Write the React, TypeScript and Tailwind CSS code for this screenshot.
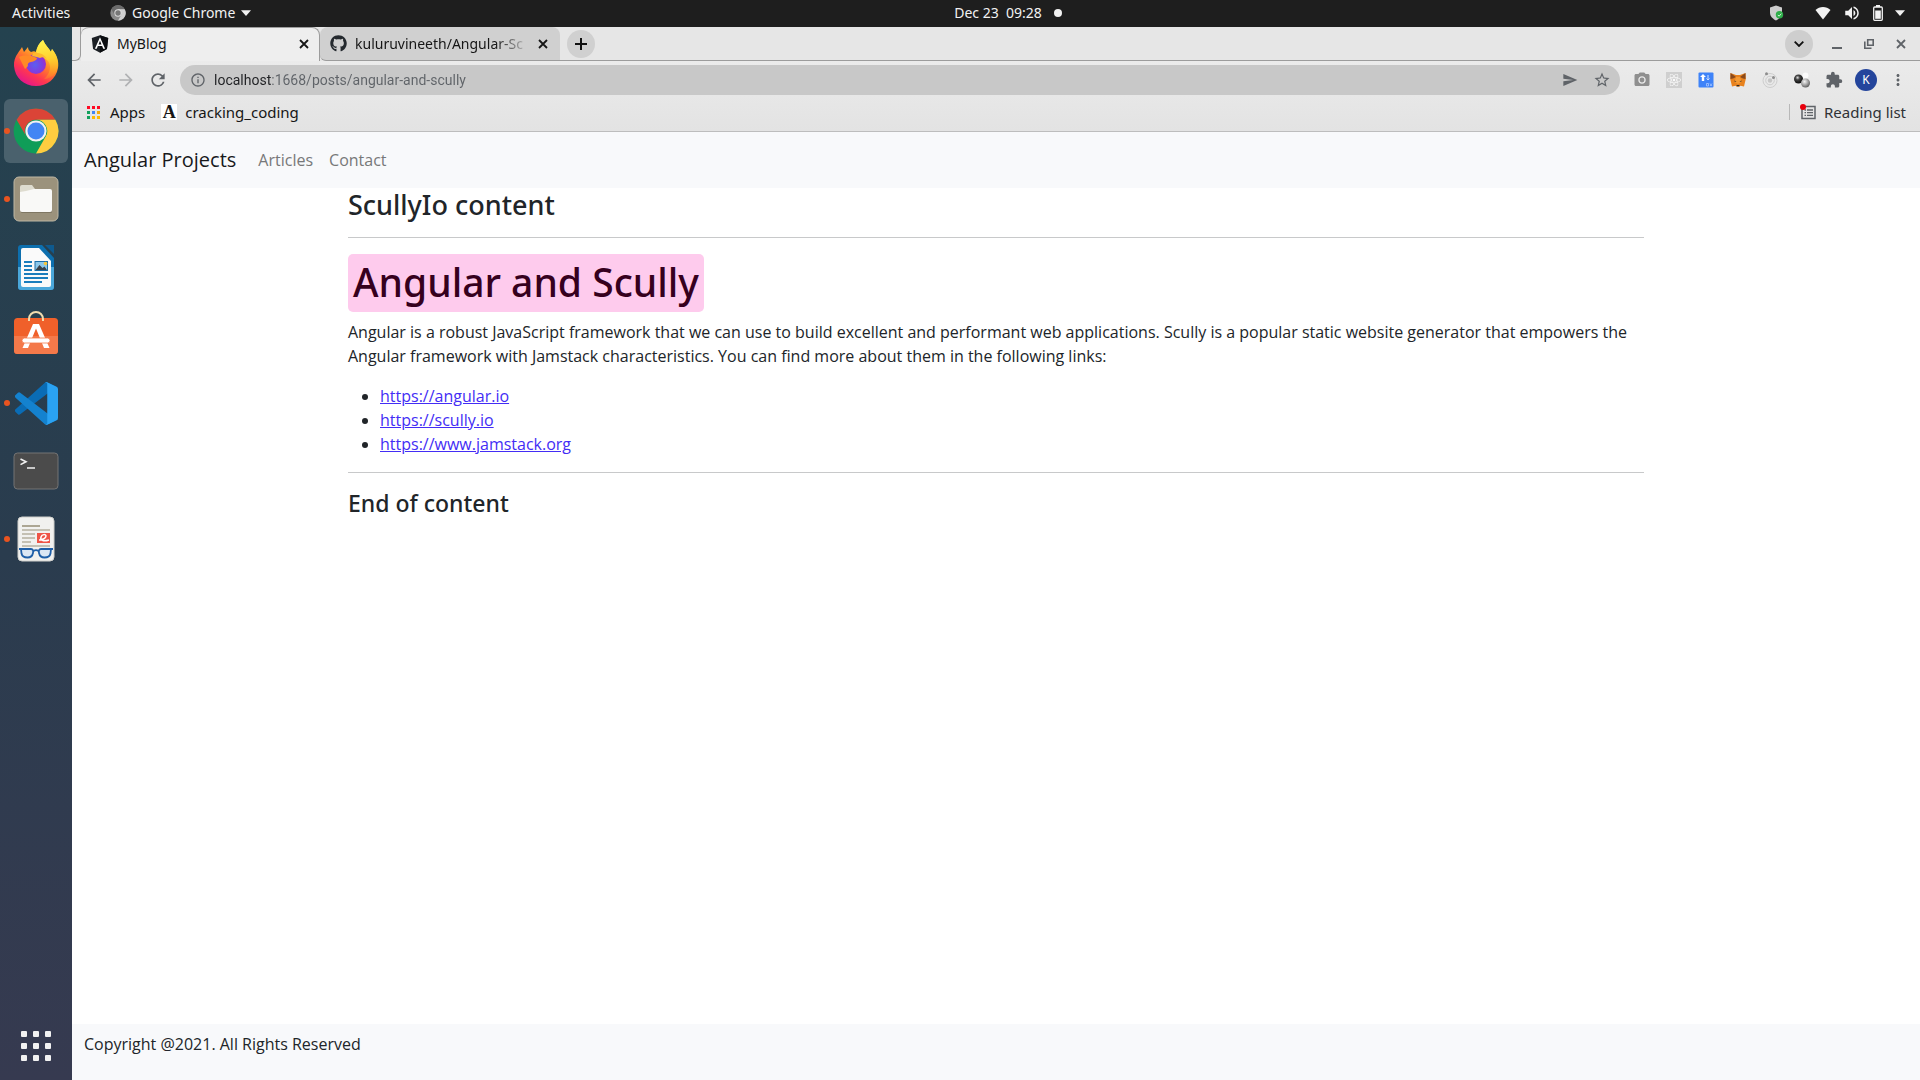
import type { ReactNode } from "react";
import {
  MdArrowBack,
  MdArrowForward,
  MdRefresh,
  MdInfoOutline,
  MdSend,
  MdStarBorder,
  MdPhotoCamera,
  MdExtension,
  MdMoreVert,
  MdVolumeUp,
} from "react-icons/md";
import { FaReact, FaGithub } from "react-icons/fa";

/* ---------- Dock icons ---------- */

function FirefoxIcon() {
  return (
    <svg viewBox="0 0 48 48" className="size-12" aria-hidden="true">
      <defs>
        <linearGradient id="ffBody" x1="0.8" y1="0.05" x2="0.25" y2="0.95">
          <stop offset="0" stopColor="#fff44f" />
          <stop offset="0.25" stopColor="#ffc02b" />
          <stop offset="0.5" stopColor="#ff7a2c" />
          <stop offset="0.75" stopColor="#ff3750" />
          <stop offset="1" stopColor="#e5178a" />
        </linearGradient>
        <linearGradient id="ffFlame" x1="0.4" y1="0" x2="0.5" y2="1">
          <stop offset="0" stopColor="#fff44f" />
          <stop offset="0.5" stopColor="#ffd02f" />
          <stop offset="1" stopColor="#ff9a1f" stopOpacity="0.3" />
        </linearGradient>
        <radialGradient id="ffGlobe" cx="0.45" cy="0.55" r="0.6">
          <stop offset="0" stopColor="#5a5ff0" />
          <stop offset="0.6" stopColor="#7d3fe0" />
          <stop offset="1" stopColor="#a528c4" />
        </radialGradient>
      </defs>
      <path
        fill="url(#ffBody)"
        d="M31 1c2 5 6 8 8 12l1-3c5 6 7 12 6 19-2 11-11 18-22 18C12 47 3 39 2 27c-.3-5 1-9 4-13 1-2 3-4 4-6l2 5 4-5c0 2 1 4 3 5 2-1 4-1 5 0 1-5 3-9 7-12z"
      />
      <path
        fill="url(#ffFlame)"
        d="M31 1c2 5 6 8 8 12l1-3c6 8 8 16 3 24-3 4-7 6-11 6 6-5 8-13 4-18-3-4-10-5-12-9 1-5 3-9 7-12z"
      />
      <circle cx="24" cy="25" r="10" fill="url(#ffGlobe)" />
      <path fill="#ff8a26" d="M7 18c5-2 11-2 18 1 0 2-3 3.500-6 4-3 .4-3.500 2-3 4l-3 3z" />
      <path fill="#ffb82e" d="M21 14c6-1 11 1 14 6-3-2-5-2-7-1-2-1-5-1-8-2z" />
    </svg>
  );
}

function ChromeIcon() {
  return (
    <svg viewBox="0 0 48 48" className="size-12" aria-hidden="true">
      <circle cx="24" cy="24" r="22.4" fill="#0f9d58" />
      <path fill="#db4437" d="M4.6 12.8A22.4 22.4 0 0 1 43.4 12.8H24A11.2 11.2 0 0 0 14.3 29.6z" />
      <path fill="#ffcd40" d="M43.4 12.8A22.4 22.4 0 0 1 24 46.4l9.7-16.8A11.2 11.2 0 0 0 24 12.8z" />
      <circle cx="24" cy="24" r="10.6" fill="#f1f1f1" />
      <circle cx="24" cy="24" r="8.5" fill="#4285f4" />
    </svg>
  );
}

function FilesIcon() {
  return (
    <svg viewBox="0 0 48 48" className="size-12" aria-hidden="true">
      <rect x="2" y="2" width="44" height="44" rx="5" fill="#9b927c" stroke="#beb7a4" strokeWidth="1" />
      <path fill="#7f7763" d="M9 34h31v3a1 1 0 0 1-1 1H10a1 1 0 0 1-1-1z" />
      <path fill="#dedccf" d="M8 12a2 2 0 0 1 2-2h10l3 4v6H8z" />
      <path fill="#f9f9f7" d="M8 17l6-1 8-2h16a2 2 0 0 1 2 2v19a2 2 0 0 1-2 2H10a2 2 0 0 1-2-2z" />
    </svg>
  );
}

function WriterIcon() {
  return (
    <svg viewBox="0 0 48 48" className="size-12" aria-hidden="true">
      <path fill="#0d6fae" d="M9 2h21l12 13v29a3 3 0 0 1-3 3H9a3 3 0 0 1-3-3V5a3 3 0 0 1 3-3z" />
      <path fill="#4aa7da" d="M6 24h36v20a3 3 0 0 1-3 3H9a3 3 0 0 1-3-3z" />
      <path fill="#0e5a8f" d="M33 2h9v9z" />
      <path fill="#fafafa" d="M11 5h16l12 13v24a2 2 0 0 1-2 2H11a2 2 0 0 1-2-2V7a2 2 0 0 1 2-2z" />
      <path
        stroke="#1a7dbd"
        strokeWidth="2"
        d="M12 19h8M12 23h8M12 27h8M12 31h24M12 35h24M12 39h18"
      />
      <rect x="23" y="18.500" width="12.500" height="9" fill="#8cc7ea" stroke="#1a6ea8" />
      <path fill="#39424a" d="M23.500 27l4-5 3 3 2-1.500 2.500 3.500z" />
      <circle cx="33.500" cy="20.500" r="1.800" fill="#f7c63c" />
    </svg>
  );
}

function SoftwareIcon() {
  return (
    <svg viewBox="0 3 48 48" className="size-12" aria-hidden="true">
      <rect x="2" y="10" width="44" height="36" rx="3.500" fill="#f0602a" />
      <path fill="#f4794a" d="M2 28h44v14.500a3.500 3.500 0 0 1-3.500 3.500h-37A3.500 3.500 0 0 1 2 42.500z" />
      <path fill="none" stroke="#f2dcae" strokeWidth="2" d="M17 13v-2a7 7 0 0 1 14 0v2" />
      <path fill="#fff" d="M21 16h6l10.500 24h-5.500l-8-19.500L16 40h-5.500z" />
      <rect x="10" y="30" width="28" height="5" rx="2.500" fill="#fff" stroke="#f4794a" strokeWidth="0.8" />
    </svg>
  );
}

function CodeIcon() {
  return (
    <svg viewBox="0 0 100 100" className="size-[43px]" aria-hidden="true">
      <path
        fill="#0a6cb5"
        d="M96.461 10.796 75.857.876A6.23 6.23 0 0 0 68.750 2.083L1.299 63.583a4.167 4.167 0 0 0 .003 6.164l5.510 5.009a4.167 4.167 0 0 0 5.320.236l81.229-61.622C96.086 11.303 100 13.246 100 16.667v-.24a6.250 6.250 0 0 0-3.539-5.630z"
      />
      <path
        fill="#1482cf"
        d="m96.461 89.204-20.604 9.920a6.229 6.229 0 0 1-7.107-1.207L1.299 36.417a4.167 4.167 0 0 1 .003-6.164l5.510-5.009a4.167 4.167 0 0 1 5.320-.236l81.229 61.622c2.725 2.067 6.639.124 6.639-3.297v.24a6.250 6.250 0 0 1-3.539 5.630z"
      />
      <path
        fill="#2aa2f2"
        d="M75.858 99.126a6.232 6.232 0 0 1-7.108-1.210c2.306 2.307 6.250.674 6.250-2.588V4.672c0-3.262-3.944-4.895-6.250-2.589a6.232 6.232 0 0 1 7.108-1.210l20.600 9.908A6.250 6.250 0 0 1 100 16.413v67.174a6.250 6.250 0 0 1-3.541 5.633z"
      />
    </svg>
  );
}

function TerminalIcon() {
  return (
    <svg viewBox="0 0 48 48" className="size-12" aria-hidden="true">
      <rect x="2" y="6" width="44" height="36" rx="3.500" fill="#4b4b4b" stroke="#747474" strokeWidth="1" />
      <path fill="none" stroke="#f2f2f2" strokeWidth="1.600" d="M8.500 12l5.500 2.800-5.500 2.800M15 21h8" />
    </svg>
  );
}

function ViewerIcon() {
  return (
    <svg viewBox="0 0 48 48" className="size-12" aria-hidden="true">
      <rect x="6" y="2" width="36" height="44" rx="4" fill="#f1f1ef" stroke="#cfcfcb" />
      <path stroke="#a49d88" strokeWidth="1.800" d="M10 11h18" />
      <path stroke="#c4c0b3" strokeWidth="1.800" d="M10 15h28M10 19h13M10 23h13M10 27h9M10 31h28" />
      <rect x="25" y="18" width="13" height="10" fill="#ee5447" />
      <path fill="none" stroke="#fff" strokeWidth="1.500" d="M27 25c4 0 7-2 7-4s-4-2-5 1 2 5 8 3" />
      <g fill="#dbe7f4" stroke="#1f5fa8" strokeWidth="1.800">
        <path d="M9 34h10c2 0 2.500 1.500 2 4s-2 4.500-5.500 4.500-5.500-1.500-6-4z" />
        <path d="M39 34H29c-2 0-2.500 1.500-2 4s2 4.500 5.500 4.500 5.500-1.500 6-4z" />
        <path fill="none" d="M7 34h5M36 34h5M21.500 36c1.500-1 3.500-1 5 0" />
      </g>
    </svg>
  );
}

/* ---------- Small icons ---------- */

function AngularIcon() {
  return (
    <svg viewBox="30 28 190 204" className="size-[18px] shrink-0" aria-hidden="true">
      <path fill="#1b1f24" d="M125 30 31.900 63.200l14.200 123.100L125 230l78.900-43.700 14.200-123.100z" />
      <path fill="#0b0d10" d="M125 30v200l78.900-43.700 14.200-123.100z" />
      <path
        fill="#fff"
        d="M125 52.100 66.800 182.600h21.700l11.700-29.200h49.400l11.700 29.200H183zm17 83.300h-34l17-40.900z"
      />
    </svg>
  );
}

function MonoChromeIcon() {
  return (
    <svg viewBox="0 0 48 48" className="size-4" aria-hidden="true">
      <circle cx="24" cy="24" r="23" fill="#8a8a8a" />
      <path fill="#6b6b6b" d="M4 12.500A23 23 0 0 1 44 12.500H24L14 30z" />
      <path fill="#cfcfcf" d="M44 12.500A23 23 0 0 1 24 47l10-17.500-10-17z" />
      <circle cx="24" cy="24" r="11" fill="#dcdcdc" />
      <circle cx="24" cy="24" r="8" fill="#777" />
    </svg>
  );
}

function CloseIcon({ className }: { className: string }) {
  return (
    <svg viewBox="0 0 10 10" className={className} aria-hidden="true">
      <path d="M1 1l8 8M9 1l-8 8" stroke="currentColor" strokeWidth="1.800" fill="none" />
    </svg>
  );
}

function ShieldIcon() {
  return (
    <svg viewBox="0 0 16 16" className="size-4" aria-hidden="true">
      <path fill="#cdcdcd" d="M7 .5l6 2v5c0 4-3 6.500-6 8-3-1.500-6-4-6-8v-5z" />
      <circle cx="10.500" cy="9.800" r="3.700" fill="#2fae4a" />
      <path d="M8.800 9.900l1.300 1.300 2.200-2.500" fill="none" stroke="#d8f5dd" strokeWidth="1" />
    </svg>
  );
}

function WifiIcon() {
  return (
    <svg viewBox="0 0 16 14" className="h-3.5 w-4" aria-hidden="true">
      <path fill="#f2f2f2" d="M8 13.500.5 4C4.500 0 11.500 0 15.500 4z" />
    </svg>
  );
}

function BatteryIcon() {
  return (
    <svg viewBox="0 0 10 16" className="h-4 w-2.5" aria-hidden="true">
      <path fill="#f2f2f2" d="M3 0h4v2H3z" />
      <rect x="0.700" y="2" width="8.600" height="13.300" rx="1" fill="none" stroke="#f2f2f2" strokeWidth="1.300" />
      <path fill="#f2f2f2" d="M2.200 5.500h5.600v8.300H2.200z" />
    </svg>
  );
}

function CaretDown() {
  return (
    <svg viewBox="0 0 10 6" className="h-1.5 w-2.5" aria-hidden="true">
      <path fill="#f2f2f2" d="M0 .3h10L5 6z" />
    </svg>
  );
}

function ReactExtIcon() {
  return (
    <span className="flex size-4 items-center justify-center bg-[#cfcfcf] text-[#fafafa]">
      <FaReact className="size-3.5" />
    </span>
  );
}

function UploadExtIcon() {
  return (
    <svg viewBox="0 0 16 16" className="size-4" aria-hidden="true">
      <rect x="0.500" y="0.500" width="15" height="15" rx="1" fill="#3f83f8" />
      <path fill="#fff" d="M5 2l3 3H6.200v4H3.800V5H2z" />
      <path stroke="#cfe0ff" strokeWidth="1" fill="none" d="M10 3v5M8.500 6.500L10 8l1.500-1.500" />
      <path stroke="#a9c8ff" strokeWidth="0.800" fill="none" d="M8.500 11.500h2v2.500h-2zM12 11.500l2 2.500M14 11.500l-2 2.500" />
    </svg>
  );
}

function FoxExtIcon() {
  return (
    <svg viewBox="0 0 16 16" className="size-4" aria-hidden="true">
      <path fill="#e8821e" d="M.5 1l5.500 2h4l5.500-2 .3 6-1 4-.8 3.500-3.500-.7-1.500 1h-2l-1.500-1-3.500.7L1.200 11l-1-4z" />
      <path fill="#8a4a1c" d="M.5 1l5.500 4-3 1.500L.5 7zM15.500 1L10 5l3 1.500 2.500.5z" />
      <path fill="#f59a33" d="M6 5h4l1.500 5-3.500 2-3.500-2z" />
      <path fill="#2b2b2b" d="M4.500 8.500l2 1-1.800.3zM11.500 8.500l-2 1 1.800.3zM6.700 13h2.600l.2 1.300h-3z" />
    </svg>
  );
}

function OrbitExtIcon() {
  return (
    <svg viewBox="0 0 16 16" className="size-4" aria-hidden="true">
      <g fill="none" stroke="#cdcdcd" strokeWidth="1">
        <circle cx="8" cy="8.500" r="7" />
        <circle cx="8" cy="8.500" r="4.300" />
      </g>
      <circle cx="8" cy="8.500" r="2.200" fill="#c6c6c6" />
      <circle cx="4.500" cy="1.800" r="1.500" fill="#8d8d8d" />
      <circle cx="11.500" cy="5.500" r="1.500" fill="#8d8d8d" />
    </svg>
  );
}

function BallsExtIcon() {
  return (
    <svg viewBox="0 0 16 16" className="size-4" aria-hidden="true">
      <defs>
        <radialGradient id="ballDark" cx="0.4" cy="0.35" r="0.6">
          <stop offset="0" stopColor="#ddd" />
          <stop offset="0.4" stopColor="#444" />
          <stop offset="1" stopColor="#111" />
        </radialGradient>
        <radialGradient id="ballGrey" cx="0.4" cy="0.35" r="0.7">
          <stop offset="0" stopColor="#f4f4f4" />
          <stop offset="0.6" stopColor="#999" />
          <stop offset="1" stopColor="#555" />
        </radialGradient>
      </defs>
      <circle cx="11.500" cy="3.500" r="3" fill="#fafafa" />
      <circle cx="4.500" cy="7" r="4.500" fill="url(#ballDark)" />
      <circle cx="11.500" cy="11" r="4.500" fill="url(#ballGrey)" />
    </svg>
  );
}

const appDots = [
  "bg-[#ff0a24]",
  "bg-[#ff0a24]",
  "bg-[#ff0a24]",
  "bg-[#12a05c]",
  "bg-[#4285f4]",
  "bg-[#f4a90b]",
  "bg-[#12a05c]",
  "bg-[#ffb900]",
  "bg-[#ffb900]",
];

/* ---------- Desktop ---------- */

function TopBar() {
  return (
    <header className="grid h-[27px] shrink-0 grid-cols-[1fr_auto_1fr] items-center bg-[#1e1e1e] pb-0.5 text-sm text-[#f2f2f2]">
      <div className="flex items-center">
        <button className="w-[98px] pl-3 text-left">Activities</button>
        <button className="flex items-center gap-1.5 pl-3">
          <MonoChromeIcon />
          <span>Google Chrome</span>
          <CaretDown />
        </button>
      </div>
      <button className="flex items-center gap-3 pl-24 whitespace-pre">
        Dec 23  09:28
        <span className="size-2 rounded-full bg-[#f2f2f2]" />
      </button>
      <div className="flex items-center justify-end gap-3 pr-[15px]">
        <span className="mr-[18px]">
          <ShieldIcon />
        </span>
        <WifiIcon />
        <MdVolumeUp className="size-[18px]" />
        <BatteryIcon />
        <CaretDown />
      </div>
    </header>
  );
}

type DockItem = { label: string; icon: ReactNode; running?: boolean; active?: boolean };

const dockItems: DockItem[] = [
  { label: "Firefox", icon: <FirefoxIcon /> },
  { label: "Google Chrome", icon: <ChromeIcon />, running: true, active: true },
  { label: "Files", icon: <FilesIcon />, running: true },
  { label: "LibreOffice Writer", icon: <WriterIcon /> },
  { label: "Ubuntu Software", icon: <SoftwareIcon /> },
  { label: "Visual Studio Code", icon: <CodeIcon />, running: true },
  { label: "Terminal", icon: <TerminalIcon /> },
  { label: "Document Viewer", icon: <ViewerIcon />, running: true },
];

function Dock() {
  return (
    <nav
      aria-label="Dock"
      className="flex w-[72px] shrink-0 flex-col items-center gap-1 bg-linear-to-b from-[#24424f] via-[#2a3c4e] to-[#363a50] pt-1"
    >
      {dockItems.map((item) => (
        <button
          key={item.label}
          aria-label={item.label}
          className={
            item.active
              ? "relative flex size-16 items-center justify-center rounded-md bg-[#4a616d]"
              : "relative flex size-16 items-center justify-center rounded-md"
          }
        >
          {item.running && (
            <span className="absolute top-1/2 left-0 size-1.5 -translate-y-1/2 rounded-full bg-[#e95420]" />
          )}
          {item.icon}
        </button>
      ))}
      <button aria-label="Show applications" className="mt-auto mb-[19px] grid grid-cols-3 gap-1.5">
        {Array.from({ length: 9 }, (_, i) => (
          <span key={i} className="size-1.5 rounded-[1px] bg-[#f2f2f2]" />
        ))}
      </button>
    </nav>
  );
}

/* ---------- Browser ---------- */

function TabStrip() {
  return (
    <div className="flex h-[34px] items-stretch bg-[#e6e6e6] text-sm text-[#161616]">
      <span className="w-[9px] rounded-br-md border-r border-b border-[#9c9c9c]" />
      <div className="flex w-[239px] items-center rounded-t-lg border-t border-r border-[#9c9c9c] bg-[#eeeeee] pr-1.5 pb-0.5 pl-2.5">
        <AngularIcon />
        <button className="flex-1 pl-2 text-left">MyBlog</button>
        <button aria-label="Close MyBlog" className="p-1">
          <CloseIcon className="size-2.5" />
        </button>
      </div>
      <div className="flex w-60 items-center rounded-t-lg rounded-bl-md border-b border-[#9c9c9c] bg-[#d0d0d0] pr-2 pl-2.5">
        <FaGithub className="size-[17px] shrink-0 text-[#24292e]" />
        <button className="mr-1 ml-2 flex-1 overflow-hidden mask-r-from-80% text-left whitespace-nowrap">
          kuluruvineeth/Angular-Sc
        </button>
        <button aria-label="Close kuluruvineeth/Angular-Sc" className="p-1">
          <CloseIcon className="size-2.5" />
        </button>
      </div>
      <div className="flex flex-1 items-center border-b border-[#9c9c9c] pr-[3px] pl-[7px]">
        <button aria-label="New tab" className="flex size-7 items-center justify-center rounded-full bg-[#d0d0d0]">
          <svg viewBox="0 0 12 12" className="size-3" aria-hidden="true">
            <path d="M6 0v12M0 6h12" stroke="#111" strokeWidth="2" />
          </svg>
        </button>
        <button
          aria-label="Search tabs"
          className="mr-2 ml-auto flex size-7 items-center justify-center rounded-full bg-[#cecece]"
        >
          <svg viewBox="0 0 10 6" className="h-1.5 w-2.5" aria-hidden="true">
            <path d="M.7.7L5 5 9.300.7" stroke="#111" strokeWidth="1.800" fill="none" />
          </svg>
        </button>
        <button aria-label="Minimize" className="flex w-8 justify-center pt-2">
          <span className="h-0.5 w-2.5 bg-[#5f6368]" />
        </button>
        <button aria-label="Restore" className="flex w-8 justify-center">
          <svg viewBox="0 0 10 10" className="size-2.5" aria-hidden="true">
            <path d="M3.700.8h5.500v5.500H3.700zM.8 2.500v6.700h6.700" fill="none" stroke="#5f6368" strokeWidth="1.600" />
          </svg>
        </button>
        <button aria-label="Close window" className="flex w-8 justify-center text-[#5f6368]">
          <CloseIcon className="size-2.5" />
        </button>
      </div>
    </div>
  );
}

const extensions: { label: string; icon: ReactNode }[] = [
  { label: "Screenshot", icon: <MdPhotoCamera className="size-[18px] text-[#8f8f8f]" /> },
  { label: "React Developer Tools", icon: <ReactExtIcon /> },
  { label: "Upload", icon: <UploadExtIcon /> },
  { label: "MetaMask", icon: <FoxExtIcon /> },
  { label: "Orbit", icon: <OrbitExtIcon /> },
  { label: "Spheres", icon: <BallsExtIcon /> },
  { label: "Extensions", icon: <MdExtension className="size-[18px]" /> },
];

function Toolbar() {
  return (
    <div className="flex h-[38px] items-center pr-1.5 pl-1.5 text-[#5f6368]">
      <button aria-label="Back" className="flex w-8 justify-center">
        <MdArrowBack className="size-5" />
      </button>
      <button aria-label="Forward" className="flex w-8 justify-center text-[#b0b1b3]">
        <MdArrowForward className="size-5" />
      </button>
      <button aria-label="Reload" className="flex w-8 justify-center">
        <MdRefresh className="size-5" />
      </button>
      <div className="mr-1.5 ml-1.5 flex h-[30px] flex-1 items-center rounded-full bg-[#c8c8c8] pr-0.5 pl-2.5">
        <MdInfoOutline className="size-4 shrink-0" />
        <input
          aria-label="Address"
          defaultValue="localhost:1668/posts/angular-and-scully"
          className="ml-2 flex-1 bg-linear-to-r from-[#202124] from-[58px] to-[#5f6368] to-[58px] bg-clip-text font-['Roboto',sans-serif] text-sm text-transparent outline-none"
        />
        <button aria-label="Share" className="flex w-8 justify-center">
          <MdSend className="size-4" />
        </button>
        <button aria-label="Bookmark this page" className="flex w-8 justify-center">
          <MdStarBorder className="size-[18px]" />
        </button>
      </div>
      {extensions.map((e) => (
        <button key={e.label} aria-label={e.label} className="flex w-8 justify-center">
          {e.icon}
        </button>
      ))}
      <button
        aria-label="Profile"
        className="mx-[5px] flex size-[22px] items-center justify-center rounded-full bg-[#24459c] text-xs text-white"
      >
        K
      </button>
      <button aria-label="Menu" className="flex w-8 justify-center">
        <MdMoreVert className="size-[18px]" />
      </button>
    </div>
  );
}

function Bookmarks() {
  return (
    <div className="flex h-[26px] items-center pr-3.5 pl-[15px] text-[15px] leading-none text-[#161616]">
      <button className="flex items-center gap-2.5">
        <span className="grid grid-cols-3 gap-0.5">
          {appDots.map((c, i) => (
            <span key={i} className={`size-[3px] ${c}`} />
          ))}
        </span>
        Apps
      </button>
      <button className="ml-4 flex items-center gap-2">
        <span className="flex size-4 items-center justify-center bg-white font-['Liberation_Serif',serif] text-lg font-bold">
          A
        </span>
        cracking_coding
      </button>
      <button className="ml-auto flex h-4 items-center gap-2 border-l border-[#b8b8b8] pl-2.5 text-[#303236]">
        <svg viewBox="0 0 16 16" className="size-4" aria-hidden="true">
          <rect x="2" y="2.500" width="13" height="12" fill="none" stroke="#5f6368" strokeWidth="1.500" />
          <path d="M4.500 6h1.500M7 6h6M4.500 8.700h1.500M7 8.700h6M4.500 11.400h1.500M7 11.400h6" stroke="#5f6368" strokeWidth="1.300" />
          <circle cx="3" cy="3" r="3" fill="#e8000d" />
        </svg>
        Reading list
      </button>
    </div>
  );
}

/* ---------- Blog page ---------- */

const links = ["https://angular.io", "https://scully.io", "https://www.jamstack.org"];

function BlogPage() {
  return (
    <div className="flex flex-1 flex-col bg-white font-['Open_Sans',sans-serif] text-base text-[#212529]">
      <nav className="flex h-14 items-center bg-[#f8f9fb] px-3">
        <a href="#home" className="mr-3.5 text-xl text-[#18191b]">
          Angular Projects
        </a>
        <a href="#articles" className="p-2 text-[#777879]">
          Articles
        </a>
        <a href="#contact" className="p-2 text-[#777879]">
          Contact
        </a>
      </nav>
      <main className="mx-auto w-full max-w-[1320px] flex-1 px-3">
        <h3 className="mb-4 font-['Noto_Sans',sans-serif] text-[27px] leading-[33px] font-medium">ScullyIo content</h3>
        <hr className="mb-4 border-[#c8c9ca]" />
        <h1 className="mb-2 w-fit rounded-[5px] bg-[#fecbed] px-[5px] pt-1 pb-1.5 font-['Noto_Sans',sans-serif] text-[39px] leading-[48px] font-medium text-[#36001e]">
          Angular and Scully
        </h1>
        <p className="mb-4">
          Angular is a robust JavaScript framework that we can use to build excellent and performant web applications.
          Scully is a popular static website generator that empowers the Angular framework with Jamstack
          characteristics. You can find more about them in the following links:
        </p>
        <ul className="mb-4 list-disc pl-8">
          {links.map((l) => (
            <li key={l}>
              <a href={l} className="text-[#432df5] underline">
                {l}
              </a>
            </li>
          ))}
        </ul>
        <hr className="mb-4 border-[#c8c9ca]" />
        <h4 className="font-['Noto_Sans',sans-serif] text-[23px] leading-7 font-medium">End of content</h4>
      </main>
      <footer className="h-14 bg-[#f8f9fb] px-3 py-2">Copyright @2021. All Rights Reserved</footer>
    </div>
  );
}

export default function App() {
  return (
    <div className="flex min-h-screen flex-col font-['Noto_Sans',sans-serif]">
      <TopBar />
      <div className="flex flex-1">
        <Dock />
        <div className="flex min-w-0 flex-1 flex-col">
          <TabStrip />
          <div className="border-b border-[#bdbdbd] bg-linear-to-b from-[#ebebeb] to-[#e3e3e3] pb-1.5">
            <Toolbar />
            <Bookmarks />
          </div>
          <BlogPage />
        </div>
      </div>
    </div>
  );
}
